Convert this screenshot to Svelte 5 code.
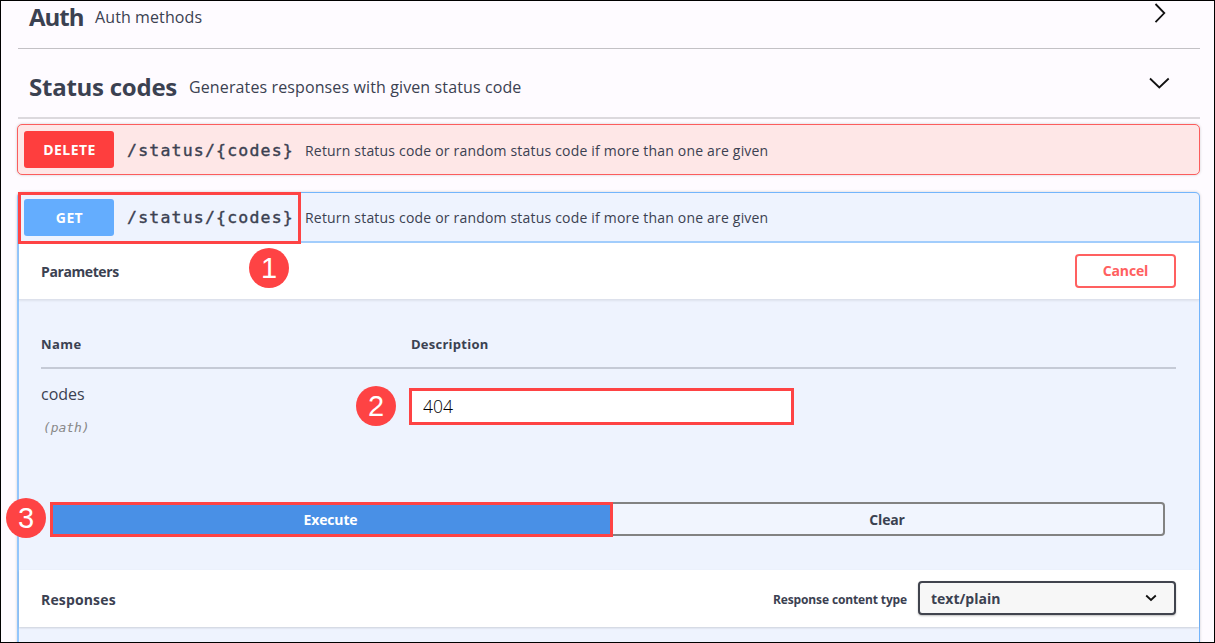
<script>
  const summary = 'Return status code or random status code if more than one are given';
  const path = '/status/{codes}';
  let code = $state('404');
</script>

<div class="page">
  <header class="tag auth">
    <h3><span class="t-auth">Auth</span></h3>
    <p class="d-auth">Auth methods</p>
    <svg class="arrow" width="30" height="30" viewBox="0 0 30 30"><path d="M10.5 6 L19.3 15 L10.5 24.2" /></svg>
  </header>
  <header class="tag status">
    <h3><span class="t-status">Status codes</span></h3>
    <p class="d-status">Generates responses with given status code</p>
    <svg class="arrow" width="30" height="30" viewBox="0 0 30 30"><path d="M5 10.5 L14.3 19.5 L23.7 10.5" /></svg>
  </header>

  <section class="op delete">
    <div class="summary">
      <span class="method">DELETE</span>
      <code>{path}</code>
      <span class="desc">{summary}</span>
    </div>
  </section>

  <section class="op get">
    <div class="summary">
      <span class="method">GET</span>
      <code>{path}</code>
      <span class="desc">{summary}</span>
      <i class="mark mark-path"></i>
    </div>
    <div class="bar params">
      <h4 class="w-params">Parameters</h4>
      <button class="cancel">Cancel</button>
    </div>
    <div class="body">
      <div class="head">
        <span class="col w-name">Name</span><span class="w-desc">Description</span>
      </div>
      <div class="row">
        <div class="col">
          <div class="pname">codes</div>
          <div class="pin">(path)</div>
        </div>
        <input bind:value={code} />
      </div>
      <div class="actions">
        <button class="execute">Execute</button>
        <button class="clear">Clear</button>
      </div>
    </div>
    <div class="bar responses">
      <h4 class="w-resp">Responses</h4>
      <div class="ctype">
        <span class="w-ct">Response content type</span>
        <div class="select">
          <span>text/plain</span>
          <svg width="12" height="8" viewBox="0 0 12 8"><path d="M1.2 1.5 L6 6 L10.8 1.5" /></svg>
        </div>
      </div>
    </div>
  </section>

  <b class="badge one">1</b>
  <b class="badge two">2</b>
  <b class="badge three">3</b>
</div>

<style>
  .page {
    position: relative;
    box-sizing: border-box;
    width: 1215px;
    height: 643px;
    overflow: hidden;
    border: 1px solid #000;
    padding: 0 14px 0 16px;
    background: #fefbff;
    color: #3b4151;
    font-family: 'Open Sans', 'Noto Sans', sans-serif;
  }
  .page * { box-sizing: border-box; }
  h3, h4, p { margin: 0; }
  .tag {
    display: flex;
    align-items: center;
    width: 1182px;
    margin-left: 1px;
    padding-left: 11px;
    white-space: nowrap;
  }
  .tag h3 { font-size: 24px; line-height: 32px; font-weight: 700; }
  .tag p { flex: 1; font-size: 16px; line-height: 24px; }
  .auth { height: 48px; padding-bottom: 15px; border-bottom: 1px solid #c3c1c5; }
  .auth h3 { width: 66px; }
  .status { height: 70px; padding-top: 8px; border-bottom: 2px solid #dcd9dd; }
  .status h3 { width: 160px; }
  .t-auth { letter-spacing: -1px; }
  .t-status { letter-spacing: -0.25px; }
  .d-auth { letter-spacing: 0.1px; }
  .d-status { letter-spacing: 0.12px; }
  .arrow { flex: none; margin-top: -8px; margin-right: 25px; fill: none; stroke: #111; stroke-width: 1.8; }

  .op { width: 1183px; border-radius: 5px; }
  .summary { position: relative; display: flex; align-items: center; padding-left: 6px; white-space: nowrap; }
  .delete {
    height: 51px;
    margin-top: 5px;
    border: 1.5px solid #fc5d5d;
    background: #fee7e7;
    box-shadow: 0 0 3px rgba(0, 0, 0, 0.18);
  }
  .delete .summary { height: 49px; }
  .get {
    height: 470px;
    margin-top: 17px;
    border: 1px solid #73b5fc;
    border-left-width: 2px;
    border-left-color: #94c6fc;
    background: #eef3fe;
    box-shadow: 0 0 3px rgba(0, 0, 0, 0.18);
  }
  .get .summary { height: 50px; border-bottom: 2px solid #a2cdfc; padding-left: 5px; }
  .method {
    display: flex;
    align-items: center;
    justify-content: center;
    width: 90px;
    height: 37px;
    border-radius: 3px;
    color: #fff;
    font-size: 14px;
    font-weight: 700;
    padding: 0 0 0 1px;
    letter-spacing: 0.4px;
  }
  .delete .method { background: #fe3e3e; }
  .get .method { background: #64adfe; }
  code {
    width: 178px;
    margin-left: 13px;
    padding-top: 2px;
    font: 400 16.5px/24px 'DejaVu Sans Mono', 'Liberation Mono', monospace;
    letter-spacing: 1.2px;
    -webkit-text-stroke: 0.4px #3b4151;
  }
  .desc { padding-top: 1px; font-size: 14px; letter-spacing: 0.19px; }

  .bar { display: flex; align-items: center; justify-content: space-between; background: #fff; padding: 0 23px 0 22px; white-space: nowrap; }
  .bar h4 { padding-top: 1px; font-size: 14px; }
  .w-params { letter-spacing: -0.4px; }
  .w-resp { letter-spacing: 0.15px; }
  .params { height: 57px; border-bottom: 1px solid #dde1ec; box-shadow: 0 1px 2px rgba(0, 0, 0, 0.07); }
  button { font-family: inherit; font-size: 14px; font-weight: 700; padding: 0; letter-spacing: -0.15px; }
  .cancel { width: 101px; height: 34px; margin-top: -1px; border: 2px solid #ff6060; border-radius: 4px; background: #fff; color: #ff6060; }
  .body { height: 270px; padding: 35px 23px 0 22px; }
  .head { display: flex; height: 34px; border-bottom: 2px solid #c5cad6; font-size: 13px; line-height: 19px; font-weight: 700; }
  .w-name { letter-spacing: 0.4px; }
  .w-desc { letter-spacing: 0.25px; }
  .col { flex: none; width: 370px; }
  .row { display: flex; height: 133px; }
  .pname { margin-top: 13px; font-size: 16px; line-height: 24px; }
  .pin { margin: 12px 0 0 2px; color: #888; font: italic 13px/20px 'DejaVu Sans Mono', monospace; letter-spacing: -0.1px; }
  input {
    width: 385px;
    height: 37px;
    margin: 19px 0 0 -2px;
    padding: 0 11px 2px;
    border: 3px solid #fe4344;
    background: #fff;
    color: #000;
    font: 300 17.5px 'Open Sans', sans-serif;
    outline: none;
  }
  .actions { display: flex; width: 1115px; margin-left: 9px; }
  .execute { width: 563px; height: 35px; border: 3px solid #fe4344; background: #4990e6; color: #fff; padding-right: 2px; }
  .clear { width: 552px; height: 34px; border: 2px solid #828282; border-left: 0; border-radius: 0 4px 4px 0; background: #f1f5fe; color: #3b4151; padding-right: 2px; }
  .responses { height: 57px; box-shadow: 0 1px 2px rgba(0, 0, 0, 0.15); }
  .ctype { display: flex; align-items: center; font-size: 12px; font-weight: 700; }
  .w-ct { width: 145px; letter-spacing: -0.13px; padding-top: 2px; }
  .select {
    display: flex;
    align-items: center;
    justify-content: space-between;
    width: 258px;
    height: 34px;
    margin-top: -1px;
    padding: 0 17px 0 11px;
    border: 2px solid #41444e;
    border-radius: 4px;
    background: #f7f7f7;
    box-shadow: 0 1px 2px rgba(0, 0, 0, 0.25);
    font-size: 14px;
  }
  .select svg { fill: none; stroke: #111; stroke-width: 1.8; }

  .mark { position: absolute; border: 3px solid #fe4344; }
  .mark-path { left: -1px; top: -1px; width: 283px; height: 52px; z-index: 2; }
  .badge {
    position: absolute;
    width: 40px;
    height: 40px;
    border-radius: 50%;
    background: #fe4344;
    color: #fff;
    font: 400 29px/40px 'Liberation Sans', Arial, sans-serif;
    text-align: center;
  }
  .one { left: 248px; top: 247px; }
  .two { left: 355px; top: 385px; }
  .three { left: 5px; top: 497px; }
</style>
